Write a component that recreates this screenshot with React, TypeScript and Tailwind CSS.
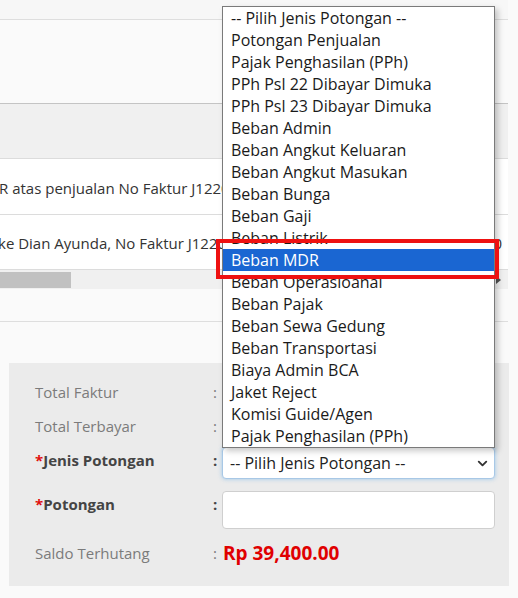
import React from "react";
import { ChevronDown } from "lucide-react";

const options = [
  "-- Pilih Jenis Potongan --",
  "Potongan Penjualan",
  "Pajak Penghasilan (PPh)",
  "PPh Psl 22 Dibayar Dimuka",
  "PPh Psl 23 Dibayar Dimuka",
  "Beban Admin",
  "Beban Angkut Keluaran",
  "Beban Angkut Masukan",
  "Beban Bunga",
  "Beban Gaji",
  "Beban Listrik",
  "Beban MDR",
  "Beban Operasioanal",
  "Beban Pajak",
  "Beban Sewa Gedung",
  "Beban Transportasi",
  "Biaya Admin BCA",
  "Jaket Reject",
  "Komisi Guide/Agen",
  "Pajak Penghasilan (PPh)",
];

const font = { fontFamily: '"Open Sans", "Noto Sans", sans-serif' };

export default function App() {
  return (
    <div
      className="relative w-[518px] h-[598px] overflow-hidden bg-[#fafafa] text-[#333]"
      style={font}
    >
      {/* table area */}
      <div className="w-[508px]">
        <div className="h-[20px] bg-[#f7f7f7] border-b border-[#dedede]" />
        <div className="h-[84px] border-b border-[#c4c4c4]" />
        <div className="h-[55px] bg-[#f0f0f0] border-b border-[#dcdcdc]" />
        <div className="h-[56px] bg-white border-b border-[#dcdcdc] flex items-center pt-[4px] whitespace-nowrap text-[15px] text-[#333] overflow-hidden">
          <span className="-ml-[1px]">R atas penjualan No Faktur J1220</span>
        </div>
        <div className="h-[55px] bg-white border-b border-[#dcdcdc] flex items-center justify-between pt-[2px] whitespace-nowrap text-[15px] text-[#333] overflow-hidden">
          <span className="-ml-[2px]">ke Dian Ayunda, No Faktur J1220</span>
          <span className="mr-[6px]">0</span>
        </div>
        <div className="h-[19px] bg-[#f0f0f0] flex items-center justify-between">
          <div className="w-[71px] h-[16px] bg-[#c1c1c1]" />
          <div className="mr-[7px] w-0 h-0 border-y-[4px] border-y-transparent border-l-[5px] border-l-[#505050]" />
        </div>
        <div className="h-[33px] border-b border-[#dedede]" />
      </div>

      {/* form panel */}
      <div className="mt-[41px] ml-[9px] w-[500px] h-[223px] bg-[#ebebeb] pl-[26px] pt-[12px] text-[15px]">
        <div className="flex items-center h-[34px]">
          <div className="w-[178px] text-[#7b7b7b]">Total Faktur</div>
          <div className="w-[9px] text-[#7b7b7b]">:</div>
        </div>
        <div className="flex items-center h-[34px]">
          <div className="w-[178px] text-[#7b7b7b]">Total Terbayar</div>
          <div className="w-[9px] text-[#7b7b7b]">:</div>
        </div>
        <div className="flex items-start h-[44px] pt-[4px]">
          <div className="w-[178px] font-bold text-[#444] pt-[2px]">
            <span className="text-[#e01010]">*</span>Jenis Potongan
          </div>
          <div className="w-[9px] font-bold text-[#444] pt-[2px]">:</div>
          <div className="w-[273px] h-[32px] bg-white rounded-[4px] border border-[#a8c8e6] shadow-[0_0_4px_rgba(102,175,233,0.6)] flex items-center justify-between pl-[7px] pr-[4px] text-[16px] text-[#222]">
            <span>-- Pilih Jenis Potongan --</span>
            <ChevronDown size={15} strokeWidth={3} className="text-[#333]" />
          </div>
        </div>
        <div className="flex items-start h-[46px] pt-[4px]">
          <div className="w-[178px] font-bold text-[#444] pt-[2px]">
            <span className="text-[#e01010]">*</span>Potongan
          </div>
          <div className="w-[9px] font-bold text-[#444] pt-[2px]">:</div>
          <div className="w-[273px] h-[38px] bg-white rounded-[4px] border border-[#cfcfcf]" />
        </div>
        <div className="flex items-center h-[40px]">
          <div className="w-[178px] text-[#7b7b7b]">Saldo Terhutang</div>
          <div className="w-[10px] text-[#7b7b7b]">:</div>
          <div className="font-bold text-[#e00000] text-[19px]">Rp 39,400.00</div>
        </div>
      </div>

      {/* open select list */}
      <div className="absolute left-[222px] top-[6px] w-[273px] bg-white border border-[#7a7a7a] shadow-[3px_3px_6px_rgba(0,0,0,0.22)] text-[16px] text-[#1a1a1a]">
        {options.map((o, i) => (
          <div
            key={i}
            className={
              i === 11
                ? "h-[22px] leading-[22px] pl-[8px] bg-[#1a66d2] text-white whitespace-nowrap"
                : "h-[22px] leading-[22px] pl-[8px] whitespace-nowrap"
            }
          >
            {o}
          </div>
        ))}
      </div>

      {/* highlight box */}
      <div className="absolute left-[216px] top-[239px] w-[283px] h-[40px] border-[4px] border-[#ee1111]" />
    </div>
  );
}
